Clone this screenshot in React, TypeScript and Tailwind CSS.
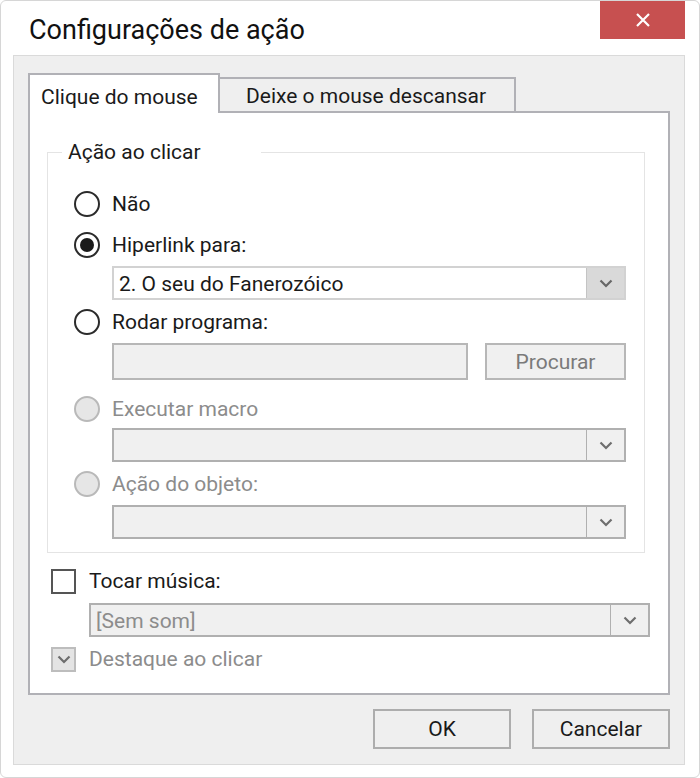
import React from 'react';

const font = { fontFamily: 'Roboto, "Liberation Sans", sans-serif' };

function Chevron({ className = '' }: { className?: string }) {
  return (
    <svg width="14" height="9" viewBox="0 0 14 9" className={className}>
      <path d="M1.5 1.5 L7 7 L12.5 1.5" fill="none" stroke="currentColor" strokeWidth="2.2" />
    </svg>
  );
}

function Radio({ checked = false, disabled = false }: { checked?: boolean; disabled?: boolean }) {
  return (
    <span
      className={
        'flex h-[26px] w-[26px] shrink-0 items-center justify-center rounded-full border-2 ' +
        (disabled ? 'border-[#b9b9b9] bg-[#e6e6e6]' : 'border-[#2b2b2b] bg-white')
      }
    >
      {checked && <span className="h-[14px] w-[14px] rounded-full bg-[#1a1a1a]" />}
    </span>
  );
}

function RadioRow({ label, checked, disabled, className = '' }: { label: string; checked?: boolean; disabled?: boolean; className?: string }) {
  return (
    <div className={'flex h-[36px] items-center gap-[12px] ' + className}>
      <Radio checked={checked} disabled={disabled} />
      <span className={'pt-[2px] text-[21px] ' + (disabled ? 'text-[#8c8c8c]' : 'text-[#1a1a1a]')}>{label}</span>
    </div>
  );
}

function Select({ value, disabled, className = '' }: { value?: string; disabled?: boolean; className?: string }) {
  return (
    <div
      className={
        'flex h-[34px] items-stretch border-2 ' +
        (disabled ? 'border-[#b0b0b0] bg-[#f0f0f0]' : 'border-[#d2d2d2] bg-white') +
        ' ' +
        className
      }
    >
      <span className={'flex flex-1 items-center pl-[5px] pt-[3px] text-[21px] ' + (disabled ? 'text-[#8c8c8c]' : 'text-[#1a1a1a]')}>
        {value}
      </span>
      <span
        className={
          'flex w-[38px] items-center justify-center border-l ' +
          (disabled ? 'border-[#b0b0b0] text-[#6e6e6e]' : 'border-[#c4c4c4] bg-[#d9d9d9] text-[#666]')
        }
      >
        <Chevron />
      </span>
    </div>
  );
}

export default function App() {
  return (
    <div style={font} className="flex h-[778px] w-[700px] flex-col rounded-[6px] border border-[#d6d6d6] bg-white">
      {/* title bar */}
      <div className="flex h-[54px] items-start justify-between">
        <span className="pl-[28px] pt-[12px] text-[27px] leading-[34px] text-[#111]">Configurações de ação</span>
        <button className="mr-[14px] flex h-[38px] w-[85px] items-center justify-center bg-[#c75050] text-white">
          <svg width="16" height="16" viewBox="0 0 16 16">
            <path d="M2 2 L14 14 M14 2 L2 14" stroke="white" strokeWidth="2.2" />
          </svg>
        </button>
      </div>

      {/* gray body */}
      <div className="mb-[12px] ml-[12px] mr-[14px] flex flex-1 flex-col border border-[#dadada] bg-[#efefef] px-[14px] pt-[17px] pb-[14px]">
        {/* tabs */}
        <div className="flex h-[38px] items-end">
          <div className="relative z-10 -mb-[2px] flex h-[40px] w-[192px] items-start border-2 border-b-0 border-[#b1b1b6] bg-white pl-[11px] pt-[7px] text-[21px] text-[#1a1a1a]">
            Clique do mouse
          </div>
          <div className="flex h-[34px] w-[296px] items-center border-2 border-b-0 border-l-0 border-[#b1b1b6] bg-[#efefef] pl-[26px] pt-[3px] text-[21px] text-[#1a1a1a]">
            Deixe o mouse descansar
          </div>
        </div>

        {/* panel */}
        <div className="flex h-[584px] flex-col border-2 border-[#b1b1b6] bg-white">
          <fieldset className="ml-[17px] mr-[23px] mt-[27px] border border-[#e4e4e4] pl-[26px] pr-[18px] pb-[13px]">
            <legend className="-ml-[12px] pl-[6px] pr-[60px] text-[21px] leading-[24px] text-[#1a1a1a]">Ação ao clicar</legend>
            <RadioRow label="Não" className="mt-[22px]" />
            <RadioRow label="Hiperlink para:" checked className="mt-[5px]" />
            <Select value="2. O seu do Fanerozóico" className="ml-[38px] mt-[3px]" />
            <RadioRow label="Rodar programa:" className="mt-[4px]" />
            <div className="ml-[38px] mt-[3px] flex h-[37px] gap-[17px]">
              <div className="flex-1 border-2 border-[#b7b7b7] bg-[#f0f0f0]" />
              <button className="w-[141px] border-2 border-[#b7b7b7] bg-[#f0f0f0] pt-[2px] text-[21px] text-[#7a7a7a]">Procurar</button>
            </div>
            <RadioRow label="Executar macro" disabled className="mt-[11px]" />
            <Select disabled className="ml-[38px] mt-[1px]" />
            <RadioRow label="Ação do objeto:" disabled className="mt-[4px]" />
            <Select disabled className="ml-[38px] mt-[3px]" />
          </fieldset>

          <div className="ml-[21px] mt-[15px] flex h-[26px] items-center gap-[13px]">
            <span className="h-[25px] w-[25px] border-2 border-[#555] bg-white" />
            <span className="pt-[2px] text-[21px] text-[#1a1a1a]">Tocar música:</span>
          </div>
          <Select value="[Sem som]" disabled className="ml-[59px] mr-[18px] mt-[9px]" />
          <div className="ml-[21px] mt-[9px] flex h-[26px] items-center gap-[13px]">
            <span className="flex h-[25px] w-[25px] items-center justify-center border-2 border-[#bdbdbd] bg-[#e4e4e4] text-[#6e6e6e]">
              <Chevron />
            </span>
            <span className="pt-[2px] text-[21px] text-[#8c8c8c]">Destaque ao clicar</span>
          </div>
        </div>

        {/* buttons */}
        <div className="mt-[14px] flex justify-end gap-[21px]">
          <button className="h-[40px] w-[138px] border-2 border-[#adadad] bg-[#efefef] pt-[2px] text-[21px] text-[#1a1a1a]">OK</button>
          <button className="h-[40px] w-[138px] border-2 border-[#adadad] bg-[#efefef] pt-[2px] text-[21px] text-[#1a1a1a]">Cancelar</button>
        </div>
      </div>
    </div>
  );
}
